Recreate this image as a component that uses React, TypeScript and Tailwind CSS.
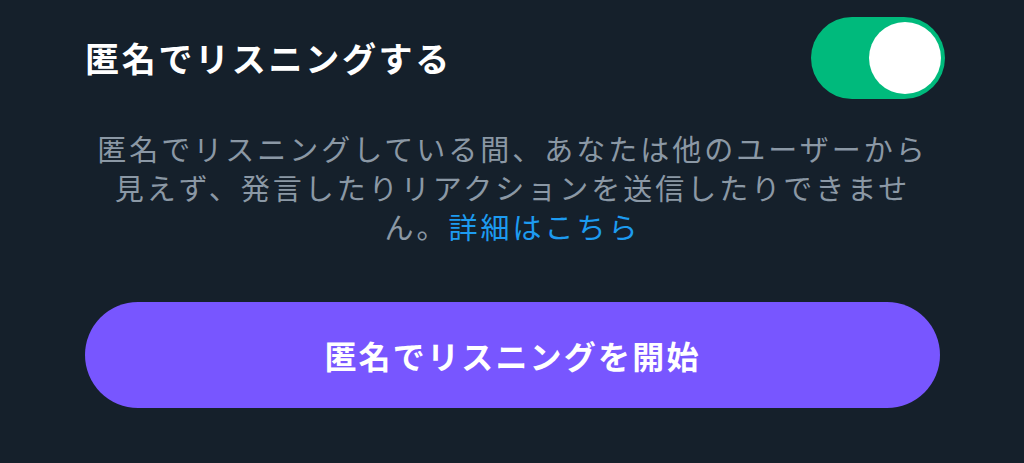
export default function App() {
  return (
    <div
      className="w-full h-[463px] bg-[#15202b] pl-[85px] pr-[84px] overflow-hidden"
      style={{ fontFamily: '"Noto Sans CJK JP", "Noto Sans", sans-serif' }}
    >
      <div className="flex items-center justify-between pt-[17px]">
        <div className="text-[34px] font-bold tracking-[2.7px] text-white leading-none">
          匿名でリスニングする
        </div>
        <button className="relative -mr-[5px] h-[82px] w-[134px] rounded-full bg-[#00ba7c]">
          <span className="absolute right-[4px] top-[5px] h-[72px] w-[72px] rounded-full bg-white" />
        </button>
      </div>

      <p className="mt-[30px] text-center text-[29px] leading-[39px] tracking-[3px] text-[#8b98a5]">
        匿名でリスニングしている間、あなたは他のユーザーから
        <br />
        見えず、発言したりリアクションを送信したりできませ
        <br />
        ん。<span className="text-[#1d9bf0]">詳細はこちら</span>
      </p>

      <button className="mt-[56px] flex h-[106px] w-full items-center justify-center rounded-full bg-[#7856ff] text-[32px] font-bold tracking-[2.2px] text-white">
        匿名でリスニングを開始
      </button>
    </div>
  );
}
